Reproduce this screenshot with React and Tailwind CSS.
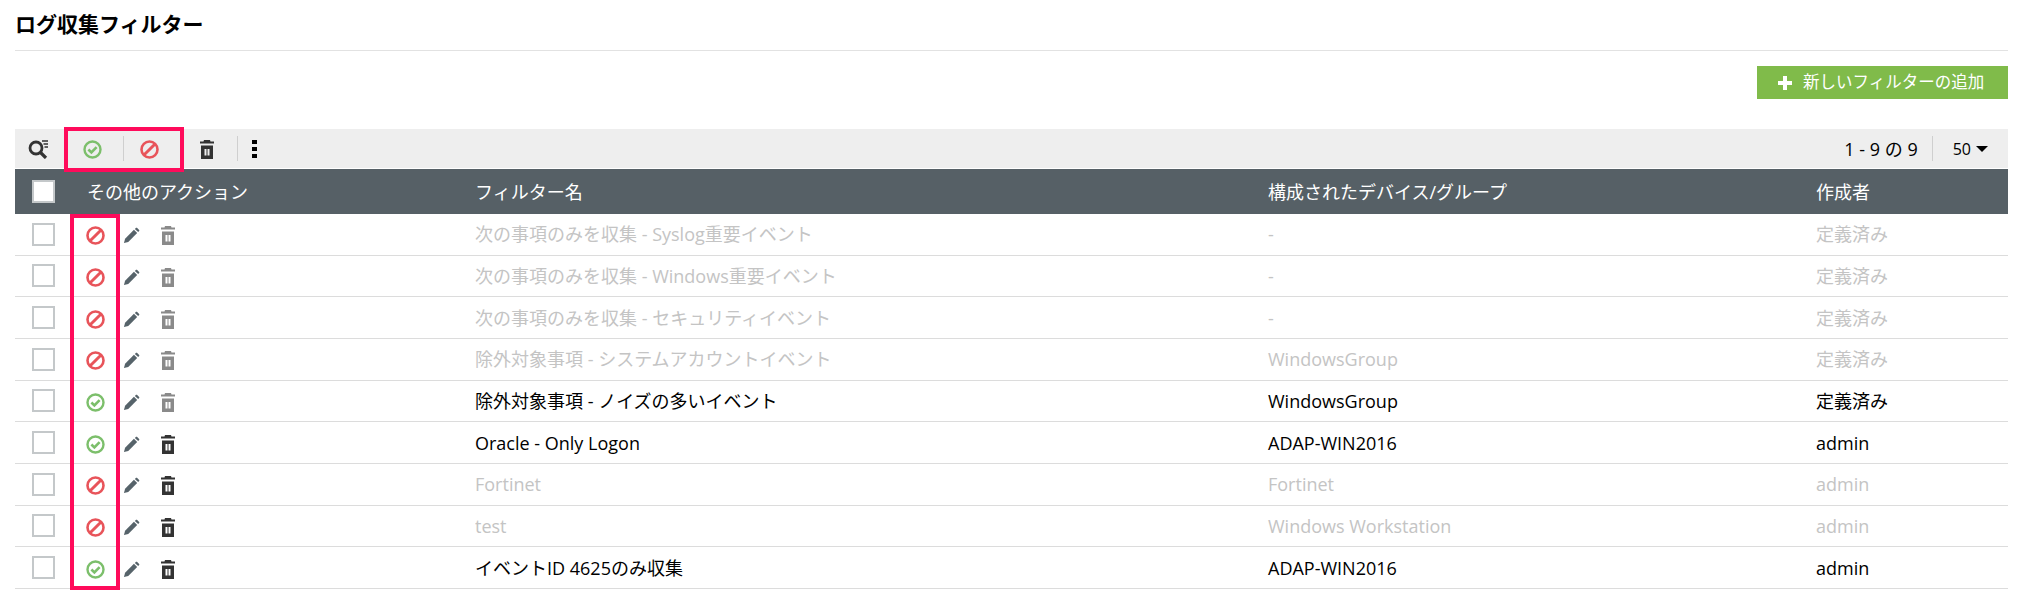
const rows = [
  { state: "off", name: "次の事項のみを収集 - Syslog重要イベント", device: "-", author: "定義済み", dim: true, lockedTrash: true },
  { state: "off", name: "次の事項のみを収集 - Windows重要イベント", device: "-", author: "定義済み", dim: true, lockedTrash: true },
  { state: "off", name: "次の事項のみを収集 - セキュリティイベント", device: "-", author: "定義済み", dim: true, lockedTrash: true },
  { state: "off", name: "除外対象事項 - システムアカウントイベント", device: "WindowsGroup", author: "定義済み", dim: true, lockedTrash: true },
  { state: "on", name: "除外対象事項 - ノイズの多いイベント", device: "WindowsGroup", author: "定義済み", dim: false, lockedTrash: true },
  { state: "on", name: "Oracle - Only Logon", device: "ADAP-WIN2016", author: "admin", dim: false, lockedTrash: false },
  { state: "off", name: "Fortinet", device: "Fortinet", author: "admin", dim: true, lockedTrash: false },
  { state: "off", name: "test", device: "Windows Workstation", author: "admin", dim: true, lockedTrash: false },
  { state: "on", name: "イベントID 4625のみ収集", device: "ADAP-WIN2016", author: "admin", dim: false, lockedTrash: false },
];

function EnabledIcon() {
  return (
    <svg width="19" height="19" viewBox="0 0 19 19" fill="none" stroke="#7cbf6b">
      <circle cx="9.5" cy="9.5" r="8" strokeWidth="2.4" />
      <path d="M5.4 9.5l3 3 5.2-5.4" strokeWidth="2.600" />
    </svg>
  );
}

function DisabledIcon() {
  return (
    <svg width="19" height="19" viewBox="0 0 19 19" fill="none" stroke="#e8545a">
      <circle cx="9.5" cy="9.5" r="8" strokeWidth="2.600" />
      <path d="M4.2 14.8L14.8 4.2" strokeWidth="3" />
    </svg>
  );
}

function PencilIcon() {
  return (
    <svg width="17" height="17" viewBox="0 0 18 18" fill="#56636a">
      <path d="M1 17l1.200-4.600L11.600 3l3.400 3.400-9.400 9.400z" />
      <path d="M12.600 2l1.200-1.100c.3-.3.7-.3 1 0l2.300 2.300c.3.3.3.7 0 1L16 5.400z" />
    </svg>
  );
}

function TrashIcon({ color }) {
  return (
    <svg width="14" height="19" viewBox="0 0 14 19" fill={color}>
      <path d="M4 0h6l.5 1.500H14V3.500H0V1.500h3.500z" />
      <path fillRule="evenodd" d="M1 5.500h12V19H1zM4.500 9v6.500h2V9zM7.500 9v6.500h2V9z" />
    </svg>
  );
}

function SearchFilterIcon() {
  return (
    <svg width="21" height="20" viewBox="0 0 21 20" fill="none" stroke="#333">
      <circle cx="8" cy="9" r="6" strokeWidth="2.800" />
      <path d="M12.500 13.500L18 19" strokeWidth="3.200" />
      <path d="M14 2h6M15.500 5h4.500M16.500 8h3.500" strokeWidth="1.400" />
    </svg>
  );
}

function CheckBox() {
  return <span className="block w-[23px] h-[23px] border-2 border-[#c4c8ca] bg-white" />;
}

function Divider() {
  return <span className="block w-px h-[25px] bg-[#cfcfcf]" />;
}

export default function App() {
  return (
    <div className="relative w-[2023px] h-[616px] bg-white px-[15px] text-[18px] text-black font-['Open_Sans','Noto_Sans_CJK_JP',sans-serif]">
      <div className="h-[51px] pt-[9px] border-b border-[#e2e2e2] box-border">
        <h1 className="text-[21px] leading-[30px] font-bold">ログ収集フィルター</h1>
      </div>

      <div className="flex justify-end pt-[15px] h-[78px] box-border">
        <button className="flex items-center w-[251px] h-[33px] pl-[21px] gap-[11px] bg-[#80bb4a] text-white text-[16.5px]">
          <svg width="14" height="14" viewBox="0 0 14 14" fill="#fff">
            <path d="M5 0h4v5h5v4H9v5H5V9H0V5h5z" />
          </svg>
          新しいフィルターの追加
        </button>
      </div>

      <div className="flex items-center h-[39px] bg-[#eeeeee]">
        <span className="ml-[13px] mt-px flex"><SearchFilterIcon /></span>
        <span className="ml-[34px] mt-[2px] flex"><EnabledIcon /></span>
        <span className="ml-[21px]"><Divider /></span>
        <span className="ml-[16px] mt-[2px] flex"><DisabledIcon /></span>
        <span className="ml-[41px] mt-[2px] flex"><TrashIcon color="#333" /></span>
        <span className="ml-[23px]"><Divider /></span>
        <span className="ml-[14px] flex flex-col gap-[3px]">
          <i className="block w-[5px] h-[4px] bg-black" />
          <i className="block w-[5px] h-[4px] bg-black" />
          <i className="block w-[5px] h-[4px] bg-black" />
        </span>
        <span className="ml-auto mt-[1px]">1 - 9 の 9</span>
        <span className="ml-[14px]"><Divider /></span>
        <span className="ml-[20px] text-[16px]">50</span>
        <span className="ml-[5px] mr-[20px] border-x-[6px] border-x-transparent border-t-[6px] border-t-black" />
      </div>

      <div className="grid grid-cols-[72px_388px_793px_548px_1fr] items-center h-[45px] mt-px bg-[#566066] text-white">
        <div className="pl-[17px]"><CheckBox /></div>
        <div className="pt-[2px]">その他のアクション</div>
        <div className="pt-[2px]">フィルター名</div>
        <div className="pt-[2px]">構成されたデバイス/グループ</div>
        <div className="pt-[2px]">作成者</div>
      </div>

      {rows.map((row) => (
        <div
          key={row.name}
          className={`flex items-center h-[41.67px] border-b border-[#dcdcdc] box-border ${row.dim ? "text-[#c4c4c4]" : "text-black"}`}
        >
          <div className="w-[72px] pl-[17px]"><CheckBox /></div>
          <div className="flex items-center w-[388px] pt-[3px] -ml-px">
            {row.state === "on" ? <EnabledIcon /> : <DisabledIcon />}
            <span className="ml-[18px] flex"><PencilIcon /></span>
            <span className="ml-[21px] flex"><TrashIcon color={row.lockedTrash ? "#8a8a8a" : "#333"} /></span>
          </div>
          <div className="w-[793px] truncate pt-[1px] ml-px">{row.name}</div>
          <div className="w-[548px] pt-[1px]">{row.device}</div>
          <div className="pt-[1px]">{row.author}</div>
        </div>
      ))}

      <div className="absolute left-[64px] top-[127px] w-[120px] h-[45px] border-[4px] border-[#ff0b5b]" />
      <div className="absolute left-[70px] top-[214px] w-[50px] h-[376px] border-[4px] border-[#ff0b5b]" />
    </div>
  );
}
